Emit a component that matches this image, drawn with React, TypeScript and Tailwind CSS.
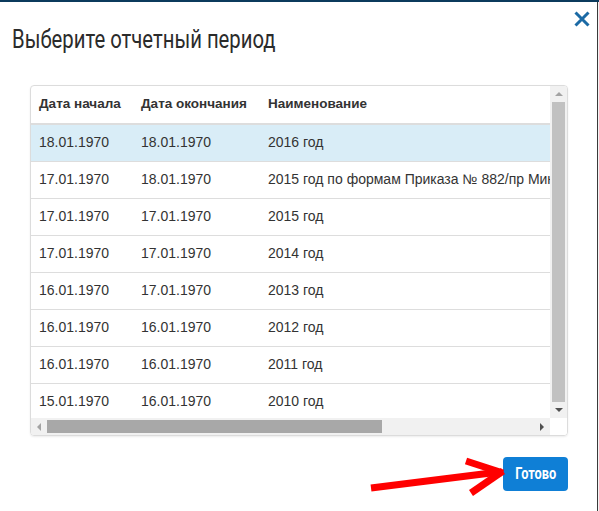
import React from "react";

type Row = { start: string; end: string; name: string };

const rows: Row[] = [
  { start: "18.01.1970", end: "18.01.1970", name: "2016 год" },
  { start: "17.01.1970", end: "18.01.1970", name: "2015 год по формам Приказа № 882/пр Минфина России" },
  { start: "17.01.1970", end: "17.01.1970", name: "2015 год" },
  { start: "17.01.1970", end: "17.01.1970", name: "2014 год" },
  { start: "16.01.1970", end: "17.01.1970", name: "2013 год" },
  { start: "16.01.1970", end: "16.01.1970", name: "2012 год" },
  { start: "16.01.1970", end: "16.01.1970", name: "2011 год" },
  { start: "15.01.1970", end: "16.01.1970", name: "2010 год" },
];

function Arrow() {
  return (
    <svg
      className="absolute left-0 top-0 pointer-events-none"
      width="599"
      height="511"
      viewBox="0 0 599 511"
    >
      <g stroke="#ff0000" strokeWidth="7" fill="none">
        <line x1="371" y1="488" x2="499" y2="472" />
        <line x1="466" y1="461" x2="503" y2="473" />
        <line x1="471" y1="493" x2="503" y2="471" />
      </g>
    </svg>
  );
}

export default function App() {
  return (
    <div
      className="relative w-[599px] h-[511px] bg-white overflow-hidden text-[#333]"
      style={{ fontFamily: '"Liberation Sans", Arial, sans-serif' }}
    >
      <div className="h-[2px] bg-[#0b3a5c]" />
      <div className="flex h-[509px]">
        <div className="relative w-[597px] bg-white">
          <button className="absolute right-[7px] top-[9px] leading-none">
            <svg width="16" height="16" viewBox="0 0 16 16">
              <path d="M1.5 1.5 L14.5 14.5 M14.5 1.5 L1.5 14.5" stroke="#1b6aa5" strokeWidth="3" />
            </svg>
          </button>

          <div className="pl-[12px] pt-[19px] h-[83px]">
            <h1
              className="text-[26px] leading-[36px] text-[#2b2b2b] origin-left scale-x-[0.78] whitespace-nowrap"
              style={{ fontFamily: 'Roboto, "Noto Sans", sans-serif' }}
            >
              Выберите отчетный период
            </h1>
          </div>

          <div className="ml-[30px] w-[538px] h-[351px] border border-[#dcdcdc] rounded-[4px] shadow-[0_1px_2px_rgba(0,0,0,0.08)] flex flex-col overflow-hidden">
            <div className="flex h-[332px]">
              <div className="w-[519px] overflow-hidden">
                <table className="border-collapse text-[14px] whitespace-nowrap w-[519px] table-fixed">
                  <colgroup>
                    <col className="w-[102px]" />
                    <col className="w-[127px]" />
                    <col />
                  </colgroup>
                  <thead>
                    <tr className="h-[38px] border-b-2 border-[#dddddd]">
                      <th className="text-left font-bold pl-[8px] text-[13.5px]">Дата начала</th>
                      <th className="text-left font-bold pl-[8px] text-[13.5px]">Дата окончания</th>
                      <th className="text-left font-bold pl-[8px] text-[13.5px]">Наименование</th>
                    </tr>
                  </thead>
                  <tbody>
                    {rows.map((r, i) => (
                      <tr
                        key={i}
                        className={`h-[37px] border-b border-[#dddddd] ${i === 0 ? "bg-[#d9edf7]" : ""}`}
                      >
                        <td className="pl-[8px]">{r.start}</td>
                        <td className="pl-[8px]">{r.end}</td>
                        <td className="pl-[8px] overflow-visible">{r.name}</td>
                      </tr>
                    ))}
                  </tbody>
                </table>
              </div>
              {/* vertical scrollbar */}
              <div className="w-[17px] bg-[#f1f1f1] flex flex-col items-center">
                <div className="h-[16px] flex items-center justify-center">
                  <div className="w-0 h-0 border-l-[4px] border-r-[4px] border-b-[4px] border-l-transparent border-r-transparent border-b-[#a3a3a3]" />
                </div>
                <div className="w-[13px] h-[300px] bg-[#c1c1c1]" />
                <div className="flex-1 flex items-center justify-center">
                  <div className="w-0 h-0 border-l-[4px] border-r-[4px] border-t-[4px] border-l-transparent border-r-transparent border-t-[#505050]" />
                </div>
              </div>
            </div>
            {/* horizontal scrollbar */}
            <div className="flex h-[17px]">
              <div className="w-[519px] bg-[#f1f1f1] flex items-center">
                <div className="w-[16px] flex items-center justify-center">
                  <div className="w-0 h-0 border-t-[4px] border-b-[4px] border-r-[4px] border-t-transparent border-b-transparent border-r-[#a3a3a3]" />
                </div>
                <div className="w-[335px] h-[13px] bg-[#a8a8a8]" />
                <div className="flex-1" />
                <div className="w-[16px] flex items-center justify-center">
                  <div className="w-0 h-0 border-t-[4px] border-b-[4px] border-l-[4px] border-t-transparent border-b-transparent border-l-[#505050]" />
                </div>
              </div>
              <div className="w-[17px] bg-white" />
            </div>
          </div>

          <div className="flex justify-end pr-[29px] pt-[21px]">
            <button
              className="w-[65px] h-[34px] rounded-[4px] bg-[#0f7fd6] text-white text-[16px] font-bold"
              style={{ fontFamily: 'Roboto, "Noto Sans", sans-serif' }}
            >
              <span className="inline-block scale-x-[0.8]">Готово</span>
            </button>
          </div>
        </div>
        <div className="w-[1px] bg-[#3a3a3a]" />
        <div className="flex-1 bg-[#f4f4f4]" />
      </div>
      <Arrow />
    </div>
  );
}
